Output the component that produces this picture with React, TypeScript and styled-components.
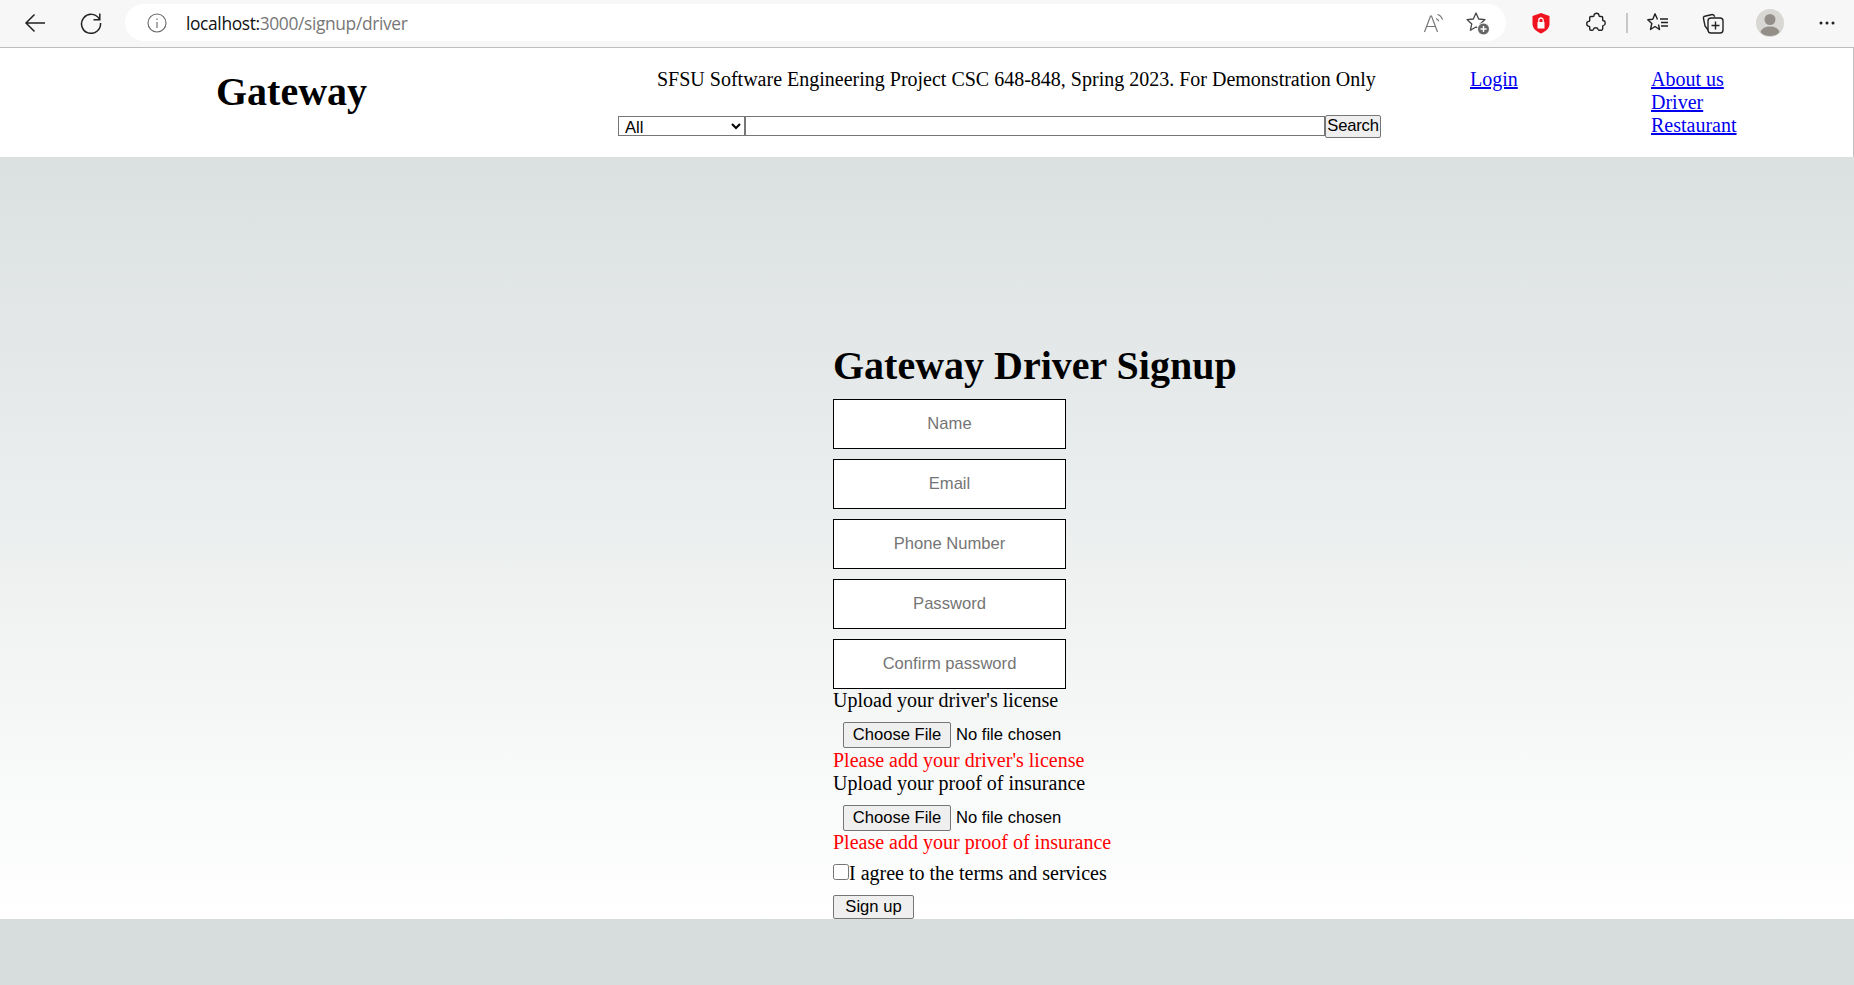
import React from "react";
import styled, { createGlobalStyle } from "styled-components";

const Global = createGlobalStyle`
  html, body { margin: 0; padding: 0; background: #d7dcdc; }
  body { font-family: "Liberation Serif", "Times New Roman", serif; font-size: 20px; overflow: hidden; }
  * { box-sizing: border-box; }
`;

const Page = styled.div`
  width: 1854px;
  height: 985px;
  display: flex;
  flex-direction: column;
`;

const BrowserBar = styled.div`
  height: 48px;
  flex: none;
  display: flex;
  align-items: center;
  background: #f7f7f7;
  border-bottom: 1px solid #bdbdbd;
  padding: 0 0 2px 24px;
`;

const NavIcon = styled.svg<{ $gap?: number }>`
  flex: none;
  display: block;
  margin-right: ${(p) => p.$gap ?? 0}px;
  fill: none;
  stroke: #222;
`;

const AddressPill = styled.div`
  width: 1381px;
  height: 37px;
  flex: none;
  margin-right: 25px;
  border-radius: 19px;
  background: #fff;
  display: flex;
  align-items: center;
  padding: 0 16px 0 22px;
`;

const UrlText = styled.div`
  flex: 1;
  margin-left: 19px;
  font: 17.4px "Open Sans", sans-serif;
  letter-spacing: -0.37px;
  color: #777;
  b { font-weight: 400; color: #111; }
`;

const Header = styled.header`
  height: 109px;
  flex: none;
  background: #fff;
  border-right: 1px solid #c4c4c4;
  display: grid;
  grid-template-columns: 618px 852px 181px 1fr;
`;

const Brand = styled.h1`
  margin: 21px 0 0 216px;
  font-size: 40px;
  line-height: 46px;
  font-weight: 700;
`;

const Center = styled.div`
  padding-top: 20px;
`;

const Tagline = styled.div`
  margin-left: 39px;
  line-height: 23px;
  white-space: nowrap;
`;

const SearchRow = styled.form`
  display: flex;
  align-items: flex-start;
  margin-top: 24px;
`;

const CategorySelect = styled.select`
  width: 127px;
  height: 20px;
  margin-top: 1px;
  padding: 0 0 0 2px;
  border: 1px solid #767676;
  border-radius: 0;
  background: #fff;
  font: 16.6px "Liberation Sans", Arial, sans-serif;
  color: #000;
`;

const SearchInput = styled.input`
  width: 580px;
  height: 20px;
  margin-top: 1px;
  border: 1px solid #767676;
  padding: 0 2px;
  background: #fff;
`;

const SearchButton = styled.button`
  width: 56px;
  height: 23px;
  padding: 0 0 2px;
  border: 1px solid #767676;
  border-radius: 2px;
  background: #efefef;
  font: 16.6px "Liberation Sans", Arial, sans-serif;
  letter-spacing: -0.2px;
  color: #000;
`;

const LinkColumn = styled.nav`
  padding-top: 20px;
  line-height: 23px;
  display: flex;
  flex-direction: column;
  align-items: flex-start;
`;

const NavLink = styled.a`
  color: #00e;
  text-decoration: underline;
`;

const Main = styled.main`
  height: 762px;
  flex: none;
  background: linear-gradient(#dbe0e0, #ffffff);
  padding: 185px 0 0 833px;
`;

const Title = styled.h2`
  margin: 0 0 9px;
  font-size: 40px;
  line-height: 48px;
  font-weight: 700;
  white-space: nowrap;
`;

const Fields = styled.div`
  display: flex;
  flex-direction: column;
  gap: 10px;
  width: 233px;
`;

const TextField = styled.input`
  width: 233px;
  height: 50px;
  padding: 0 2px 1px;
  border: 1px solid #000;
  border-radius: 0;
  background: #fff;
  text-align: center;
  font: 16.6px "Liberation Sans", Arial, sans-serif;
  &::placeholder { color: #757575; opacity: 1; }
`;

const UploadLabel = styled.div`
  line-height: 23px;
  white-space: nowrap;
`;

const FileInput = styled.input`
  display: block;
  width: 300px;
  height: 26.5px;
  margin: 10px 0 0 10px;
  font: 16.6px "Liberation Sans", Arial, sans-serif;
  color: #000;
  &::file-selector-button {
    width: 108px;
    height: 26px;
    margin-right: 5px;
    padding: 0;
    border: 1px solid #767676;
    border-radius: 2px;
    background: #efefef;
    font: 16.6px "Liberation Sans", Arial, sans-serif;
  }
`;

const ErrorText = styled.div`
  color: #f00;
  line-height: 23px;
  white-space: nowrap;
`;

const AgreeRow = styled.label`
  display: flex;
  align-items: center;
  height: 23px;
  margin-top: 8px;
  white-space: nowrap;
`;

const AgreeBox = styled.input`
  width: 16px;
  height: 16px;
  margin: 0;
  position: relative;
  top: -2px;
`;

const SubmitButton = styled.button`
  display: block;
  width: 81px;
  height: 24px;
  margin-top: 10px;
  padding: 0;
  border: 1px solid #767676;
  border-radius: 2px;
  background: #efefef;
  font: 16.6px "Liberation Sans", Arial, sans-serif;
  color: #000;
`;

export default function App() {
  return (
    <Page>
      <Global />
      <BrowserBar>
        <NavIcon $gap={34} width="22" height="22" viewBox="0 0 22 22" strokeWidth="1.5">
          <path d="M21 11H2M10.5 2.5 2 11l8.500 8.500" />
        </NavIcon>
        <NavIcon $gap={23} width="22" height="22" viewBox="0 0 22 22" strokeWidth="1.500">
          <path d="M19.500 7.500A9.500 9.500 0 1 0 20.500 11" />
          <path d="M19.800 1.500v6.300h-6.300" />
        </NavIcon>
        <AddressPill>
          <NavIcon width="20" height="20" viewBox="0 0 20 20" strokeWidth="1.100" style={{ stroke: "#666" }}>
            <circle cx="10" cy="10" r="9" />
            <path d="M10 9v6M10 5.500v1.500" />
          </NavIcon>
          <UrlText><b>localhost:</b>3000/signup/driver</UrlText>
          <NavIcon $gap={21} width="22" height="22" viewBox="0 0 22 22" strokeWidth="1.200" style={{ stroke: "#777" }}>
            <path d="M1.500 20 7.500 4h1l6 16M3.800 14.500h8.400M13 6.500c1.500.5 2.300 1.300 2.800 2.800M14.500 2.500c2.800.9 4.300 2.500 5 5.200" />
          </NavIcon>
          <NavIcon width="24" height="24" viewBox="0 0 24 24" strokeWidth="1.300" style={{ stroke: "#444" }}>
            <path d="M10 2 12.700 8l6.300.6-4.800 4.300 1.400 6.300L10 16l-5.600 3.200 1.400-6.300L1 8.600 7.300 8z" strokeLinejoin="round" />
            <circle cx="17.500" cy="18" r="6" fill="#666" stroke="#fff" strokeWidth="1" />
            <path d="M17.500 15v6M14.500 18h6" stroke="#fff" strokeWidth="1.400" />
          </NavIcon>
        </AddressPill>
        <NavIcon $gap={35} width="20" height="22" viewBox="0 0 20 22" style={{ stroke: "none" }}>
          <path d="M10 1 18.500 4v8c0 4.500-4 7.500-8.500 9.500C5.500 19.500 1.500 16.500 1.500 12V4z" fill="#f01421" />
          <path d="M6.500 10h7v6.500h-7z" fill="#fff" />
          <path d="M7.800 10V8.200a2.200 2.200 0 0 1 4.400 0V10" fill="none" stroke="#fff" strokeWidth="1.300" />
        </NavIcon>
        <NavIcon $gap={20} width="20" height="22" viewBox="0 0 20 22" strokeWidth="1.400">
          <path d="M8 3.500c0-3 5-3 5 0 0 .6.400 1 1 1h1.500c.8 0 1.200.5 1.200 1.200V8c0 .5.400.8 1 .8 2 .2 2 4.400 0 4.600-.6 0-1 .3-1 .8v2.600c0 1-.5 1.400-1.300 1.400H13c-.6 0-.8-.400-1-1-.5-2-4-2-4.500 0-.2.600-.5 1-1 1H5c-.9 0-1.300-.5-1.300-1.300V15c0-.5-.4-.8-1-.8-2.600-.2-2.600-4.600 0-4.800.6 0 1-.4 1-.9V5.800c0-.8.400-1.300 1.200-1.300H7c.6 0 1-.4 1-1z" />
        </NavIcon>
        <NavIcon $gap={19} width="2" height="22" viewBox="0 0 2 22" strokeWidth="2" style={{ stroke: "#c8c8c8" }}>
          <path d="M1 1v20" />
        </NavIcon>
        <NavIcon $gap={33} width="22" height="22" viewBox="0 0 22 22" strokeWidth="1.400">
          <path d="M10.500 7.500 8 1.800 5.800 7.200.8 7.700l4 3.800-1.300 6 4.500-3 4.500 3-1-5" strokeLinejoin="round" />
          <path d="M13 7h8M14 10.500h7M14 14h7" />
        </NavIcon>
        <NavIcon $gap={32} width="22" height="22" viewBox="0 0 22 22" strokeWidth="1.400">
          <path d="M6 18 3 14 1.500 6.500c-.3-1.200.2-2 1.200-2.200l6.500-1.600c2-.5 3 .2 3.500 2" />
          <rect x="6" y="6" width="15" height="15" rx="3" />
          <path d="M13.500 9.500v8M9.500 13.500h8" />
        </NavIcon>
        <NavIcon $gap={35} width="28" height="28" viewBox="0 0 28 28" style={{ stroke: "none" }}>
          <circle cx="14" cy="14" r="14" fill="#d9d7d4" />
          <circle cx="14" cy="10.500" r="5.500" fill="#938e88" />
          <path d="M4.500 23c1.500-4 5-5.500 9.500-5.500s8 1.500 9.500 5.500c-2.500 3-6 4-9.500 4s-7-1-9.500-4z" fill="#938e88" />
        </NavIcon>
        <NavIcon width="16" height="4" viewBox="0 0 16 4" style={{ stroke: "none" }}>
          <circle cx="2" cy="2" r="1.500" fill="#222" />
          <circle cx="8" cy="2" r="1.500" fill="#222" />
          <circle cx="14" cy="2" r="1.500" fill="#222" />
        </NavIcon>
      </BrowserBar>
      <Header>
        <Brand>Gateway</Brand>
        <Center>
          <Tagline>SFSU Software Engineering Project CSC 648-848, Spring 2023. For Demonstration Only</Tagline>
          <SearchRow>
            <CategorySelect defaultValue="All">
              <option>All</option>
            </CategorySelect>
            <SearchInput type="text" />
            <SearchButton type="button">Search</SearchButton>
          </SearchRow>
        </Center>
        <LinkColumn>
          <NavLink href="#">Login</NavLink>
        </LinkColumn>
        <LinkColumn>
          <NavLink href="#">About us</NavLink>
          <NavLink href="#">Driver</NavLink>
          <NavLink href="#">Restaurant</NavLink>
        </LinkColumn>
      </Header>
      <Main>
        <Title>Gateway Driver Signup</Title>
        <Fields>
          <TextField placeholder="Name" />
          <TextField placeholder="Email" />
          <TextField placeholder="Phone Number" />
          <TextField placeholder="Password" />
          <TextField placeholder="Confirm password" />
        </Fields>
        <UploadLabel>Upload your driver's license</UploadLabel>
        <FileInput type="file" />
        <ErrorText>Please add your driver's license</ErrorText>
        <UploadLabel>Upload your proof of insurance</UploadLabel>
        <FileInput type="file" />
        <ErrorText>Please add your proof of insurance</ErrorText>
        <AgreeRow>
          <AgreeBox type="checkbox" />I agree to the terms and services
        </AgreeRow>
        <SubmitButton type="button">Sign up</SubmitButton>
      </Main>
    </Page>
  );
}
